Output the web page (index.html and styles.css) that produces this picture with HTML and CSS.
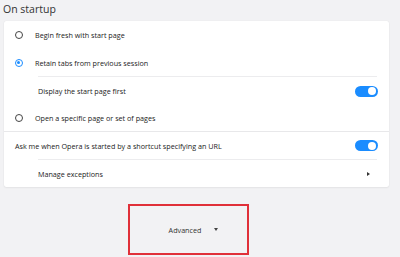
FILE: index.html
```html
<!DOCTYPE html>
<html lang="en">
<head>
    <meta charset="UTF-8">
    <title>Settings - On startup</title>
    <link rel="stylesheet" href="styles.css">
</head>
<body>
    <div class="section-title">On startup</div>

    <div class="card">
        <div class="row row-radio">
            <span class="radio"></span>
            <span class="label">Begin fresh with start page</span>
        </div>
        <div class="row row-radio short">
            <span class="radio checked"></span>
            <span class="label">Retain tabs from previous session</span>
        </div>
        <div class="sub-divider"></div>
        <div class="row row-sub tall">
            <span class="label">Display the start page first</span>
            <span class="toggle on"></span>
        </div>
        <div class="row row-radio shorter">
            <span class="radio"></span>
            <span class="label">Open a specific page or set of pages</span>
        </div>
        <div class="divider"></div>
        <div class="row row-plain">
            <span class="label">Ask me when Opera is started by a shortcut specifying an URL</span>
            <span class="toggle on"></span>
        </div>
        <div class="sub-divider"></div>
        <div class="row row-sub">
            <span class="label">Manage exceptions</span>
            <span class="arrow"></span>
        </div>
    </div>

    <div class="advanced-wrap">
        <div class="advanced">
            <span>Advanced</span>
            <span class="caret"></span>
        </div>
    </div>
</body>
</html>
```

FILE: styles.css
```css
html, body {
    margin: 0;
    padding: 0;
}

body {
    width: 400px;
    height: 257px;
    overflow: hidden;
    background: #f2f2f4;
    font-family: 'Open Sans', 'Noto Sans', sans-serif;
    color: #222;
}

.section-title {
    font-size: 10.5px;
    line-height: 14px;
    padding: 2px 0 0 3px;
    height: 21px;
    box-sizing: border-box;
    color: #333;
}

.card {
    margin-left: 4px;
    width: 385px;
    background: #fff;
    box-shadow: 0 0 1px rgba(0, 0, 0, 0.12), 0 1px 2px rgba(0, 0, 0, 0.05);
    border-radius: 2px;
}

.row {
    display: flex;
    align-items: center;
    height: 28px;
    font-size: 7.2px;
    box-sizing: border-box;
}

.row.short {
    height: 27px;
}

.row.shorter {
    height: 26px;
}

.row-radio {
    padding-left: 11px;
}

.row-radio .radio {
    margin-right: 12px;
}

.row-sub {
    padding-left: 34px;
    padding-right: 11px;
    height: 27px;
}

.row-sub.tall {
    height: 28px;
}

.row-plain {
    padding-left: 11px;
    padding-right: 11px;
    height: 27px;
}

.label {
    flex: 1;
}

.radio {
    width: 8px;
    height: 8px;
    border: 1.3px solid #444;
    border-radius: 50%;
    box-sizing: border-box;
    position: relative;
}

.radio.checked {
    border-color: #1a8cff;
}

.radio.checked::after {
    content: "";
    position: absolute;
    left: 1.2px;
    top: 1.2px;
    width: 3px;
    height: 3px;
    border-radius: 50%;
    background: #1a8cff;
}

.toggle {
    width: 23px;
    height: 11px;
    border-radius: 6px;
    background: #1a8cff;
    position: relative;
}

.toggle.on::after {
    content: "";
    position: absolute;
    right: 2px;
    top: 1.5px;
    width: 8px;
    height: 8px;
    border-radius: 50%;
    background: #fff;
}

.arrow {
    width: 0;
    height: 0;
    border-top: 2.5px solid transparent;
    border-bottom: 2.5px solid transparent;
    border-left: 3px solid #333;
    margin-right: 8px;
}

.divider {
    height: 1px;
    background: #e8e8ea;
}

.sub-divider {
    height: 1px;
    background: #ececee;
    margin: 0 12px 0 34px;
}

.advanced-wrap {
    padding: 17px 0 0 128px;
}

.advanced {
    width: 121px;
    height: 51px;
    border: 2px solid #e03039;
    box-sizing: border-box;
    display: flex;
    align-items: center;
    justify-content: center;
    gap: 13px;
    font-size: 7.2px;
    color: #333;
    padding-left: 10px;
}

.caret {
    width: 0;
    height: 0;
    border-left: 2.5px solid transparent;
    border-right: 2.5px solid transparent;
    border-top: 3px solid #444;
}
```
